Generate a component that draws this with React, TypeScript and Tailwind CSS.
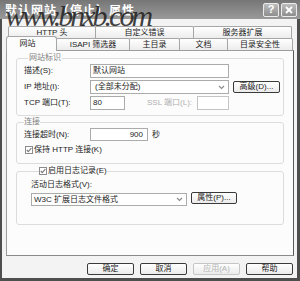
import React from "react";

const Check = () => (
  <svg width="8" height="8" viewBox="0 0 8 8" className="shrink-0">
    <rect x="0.5" y="0.5" width="7" height="7" fill="#fff" stroke="#8c8c8c" />
    <path d="M1.8 4 L3.3 5.6 L6.3 2.2" fill="none" stroke="#7a7a7a" strokeWidth="1.1" />
  </svg>
);

const Chevron = () => (
  <svg width="7" height="5" viewBox="0 0 7 5" className="shrink-0">
    <path d="M1 1 L3.5 3.5 L6 1" fill="none" stroke="#8a8a8a" strokeWidth="1.1" />
  </svg>
);

function Tab({ label, w }: { label: string; w: string }) {
  return (
    <div
      className={`${w} h-[12px] -ml-px first:ml-0 flex items-center justify-center border border-b-0 border-[#a6a6a6] rounded-t-[2px] bg-gradient-to-b from-white to-[#ececec] whitespace-nowrap`}
    >
      {label}
    </div>
  );
}

function Btn({ label, w, disabled }: { label: string; w: string; disabled?: boolean }) {
  return (
    <div
      className={`${w} h-[12px] flex items-center justify-center rounded-[2px] border bg-gradient-to-b from-white to-[#ebebeb] whitespace-nowrap ${
        disabled ? "border-[#c6c6c6] text-[#b4b4b4]" : "border-[#3a3a3a] text-[#1c1c1c]"
      }`}
    >
      {label}
    </div>
  );
}

export default function App() {
  return (
    <div className="relative w-[300px] h-[281px] overflow-hidden bg-[#f3f3f3] text-[8px] leading-[10px] text-[#1c1c1c] font-['Liberation_Sans','Noto_Sans_CJK_SC',sans-serif]">
      {/* title bar */}
      <div className="h-[19px] flex items-center pl-[5px] pr-[3px] bg-gradient-to-b from-[#767676] to-[#9a9a9a]">
        <span className="font-['Noto_Sans_CJK_SC',sans-serif] text-[12px] leading-[14px] font-bold tracking-[1px] text-white">
          默认网站（停止）属性
        </span>
        <div className="ml-auto flex gap-[2px]">
          <div className="w-[16px] h-[14px] flex items-center justify-center rounded-[2px] border border-[#ececec] bg-gradient-to-b from-[#bdbdbd] to-[#8e8e8e] text-white font-bold text-[11px] leading-none font-['Liberation_Sans',sans-serif]">
            ?
          </div>
          <div className="w-[16px] h-[14px] flex items-center justify-center rounded-[2px] border border-[#ececec] bg-gradient-to-b from-[#bdbdbd] to-[#8e8e8e]">
            <svg width="8" height="8" viewBox="0 0 8 8">
              <path d="M1 1 L7 7 M7 1 L1 7" stroke="#fff" strokeWidth="1.8" />
            </svg>
          </div>
        </div>
      </div>

      {/* body */}
      <div className="h-[262px] flex flex-col border-l-[2px] border-r-[3px] border-b-[3px] border-[#4e4e4e] pt-[7px]">
        {/* tab row 1 */}
        <div className="flex ml-[6px] h-[12px]">
          <Tab label="HTTP 头" w="w-[88px]" />
          <Tab label="自定义错误" w="w-[99px]" />
          <Tab label="服务器扩展" w="w-[99px]" />
        </div>
        {/* tab row 2 */}
        <div className="flex items-end ml-[4px] h-[12px]">
          <div className="relative z-10 w-[51px] h-[15px] -mb-px flex items-center justify-center pr-[8px] border border-b-0 border-[#a6a6a6] rounded-t-[3px] bg-[#fcfcfc]">
            网站
          </div>
          <Tab label="ISAPI 筛选器" w="w-[74px]" />
          <Tab label="主目录" w="w-[51px]" />
          <Tab label="文档" w="w-[49px]" />
          <Tab label="目录安全性" w="w-[66px]" />
        </div>

        {/* panel */}
        <div className="ml-[4px] w-[288px] h-[206px] border border-[#9c9c9c] border-r-[#5a5a5a] border-b-[#8a8a8a] bg-[#fcfcfc] pt-[1px]">
          {/* group 1 */}
          <fieldset className="mx-[9px] mt-[1px] border border-[#dcdcdc] rounded-[3px] pl-[7px] pt-[1px] pb-[5px] flex flex-col gap-[2px]">
            <legend className="ml-[4px] px-[1px] text-[#808080]">网站标识</legend>
            <div className="flex items-center h-[14px]">
              <span className="w-[66px]">描述(S):</span>
              <div className="w-[139px] h-[14px] flex items-center px-[2px] border border-[#ababab] bg-white">默认网站</div>
            </div>
            <div className="flex items-center h-[14px]">
              <span className="w-[66px]">IP 地址(I):</span>
              <div className="w-[139px] h-[14px] flex items-center pl-[4px] pr-[3px] border border-[#ababab] bg-white">
                <span className="flex-1">(全部未分配)</span>
                <Chevron />
              </div>
              <div className="ml-[4px]">
                <Btn label="高级(D)..." w="w-[47px]" />
              </div>
            </div>
            <div className="flex items-center h-[14px]">
              <span className="w-[66px]">TCP 端口(T):</span>
              <div className="w-[35px] h-[14px] flex items-center px-[2px] border border-[#ababab] bg-white">80</div>
              <span className="ml-[22px] w-[50px] text-[#b0b0b0] whitespace-nowrap">SSL 端口(L):</span>
              <div className="w-[32px] h-[14px] border border-[#c4c4c4] bg-white" />
            </div>
          </fieldset>

          {/* group 2 */}
          <fieldset className="mx-[9px] mt-[1px] border border-[#dcdcdc] rounded-[3px] pl-[7px] pt-[1px] pb-[7px] flex flex-col gap-[2px]">
            <legend className="ml-0 px-0 text-[#808080]">连接</legend>
            <div className="flex items-center h-[13px]">
              <span className="w-[66px]">连接超时(N):</span>
              <div className="w-[58px] h-[13px] flex items-center justify-end pr-[4px] border border-[#ababab] bg-white">900</div>
              <span className="ml-[4px]">秒</span>
            </div>
            <div className="flex items-center h-[13px] ml-[1px] gap-[1px]">
              <Check />
              <span>保持 HTTP 连接(K)</span>
            </div>
          </fieldset>

          {/* group 3 */}
          <fieldset className="mx-[9px] mt-[2px] border border-[#dcdcdc] rounded-[3px] pl-[14px] pt-[4px] pb-[19px] flex flex-col">
            <legend className="ml-[8px] px-0 flex items-center gap-[1px]">
              <Check />
              <span>启用日志记录(E)</span>
            </legend>
            <div className="h-[10px]">活动日志格式(V):</div>
            <div className="flex items-start h-[13px] mt-[2px]">
              <div className="w-[156px] h-[13px] mt-[1px] flex items-center pl-[2px] pr-[3px] border border-[#ababab] bg-white">
                <span className="flex-1">W3C 扩展日志文件格式</span>
                <Chevron />
              </div>
              <div className="ml-[4px]">
                <Btn label="属性(P)..." w="w-[46px]" />
              </div>
            </div>
          </fieldset>
        </div>

        {/* bottom buttons */}
        <div className="mt-[7px] h-[12px] flex justify-end gap-[6px] pr-[4px]">
          <Btn label="确定" w="w-[47px]" />
          <Btn label="取消" w="w-[47px]" />
          <Btn label="应用(A)" w="w-[47px]" disabled />
          <Btn label="帮助" w="w-[47px]" />
        </div>
      </div>

      {/* watermark */}
      <span className="pointer-events-none absolute left-[5px] top-[1px] text-[30px] leading-none italic tracking-[-3px] text-[#1e1e1e]/85 font-['Liberation_Serif',serif] whitespace-nowrap">
        www.bnxb.com
      </span>
    </div>
  );
}
